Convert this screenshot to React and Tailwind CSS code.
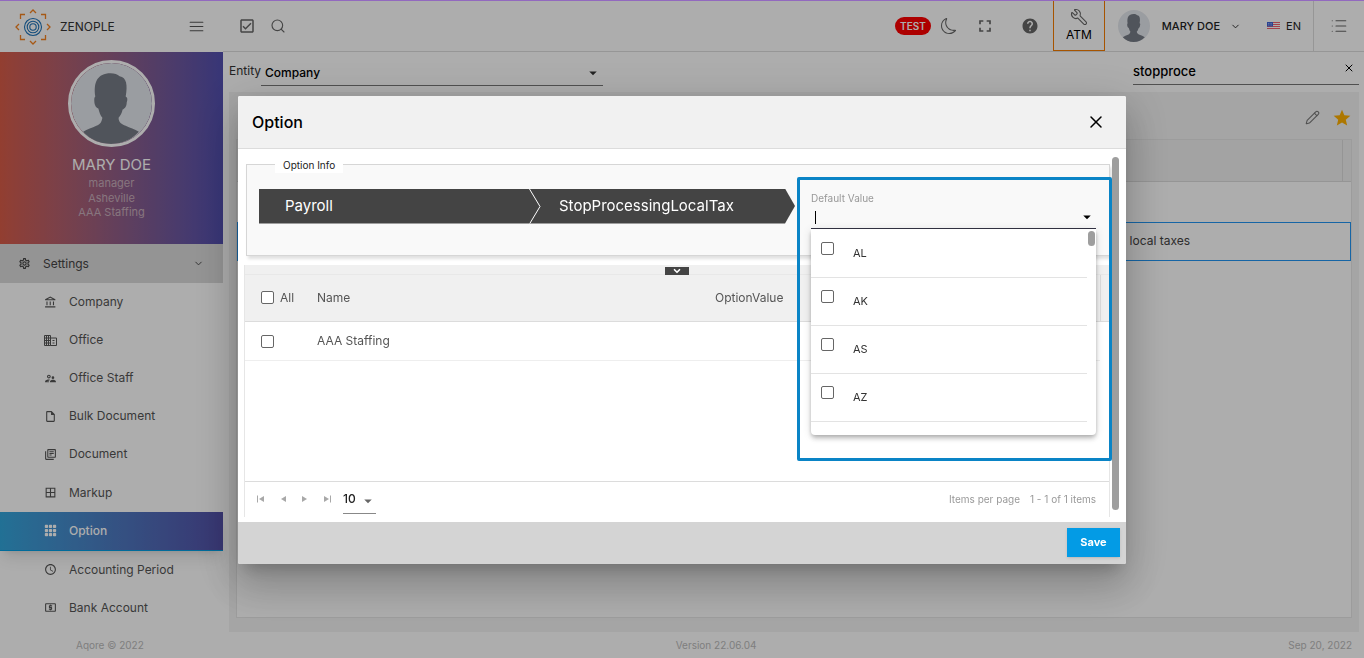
import {
  MdAccessTime,
  MdArrowDropDown,
  MdBorderAll,
  MdFullscreen,
  MdHelp,
  MdOutlineAccountBalance,
  MdOutlineCheckBox,
  MdOutlineInsertDriveFile,
  MdOutlineLibraryBooks,
  MdOutlineLocalAtm,
  MdOutlineSettings,
  MdOutlineSupervisorAccount,
  MdStar,
} from 'react-icons/md';
import { BsFillGrid3X3GapFill, BsMoon } from 'react-icons/bs';
import { FiChevronDown, FiMenu, FiSearch, FiX } from 'react-icons/fi';
import { List, Pencil, Wrench } from 'lucide-react';

const OfficeIcon = ({ className }) => (
  <svg viewBox="0 0 13 12" className={className} fill="none" stroke="currentColor" aria-hidden="true">
    <path d="M.5 1h6v10h-6zM.5 3.500h6M.5 6h6M.5 8.500h6M2.500 1v10M4.500 1v10" />
    <path d="M6.500 3.500h6V11h-6M8.500 6h2M8.500 8.500h2" />
  </svg>
);

const menuItems = [
  { label: 'Company', icon: MdOutlineAccountBalance },
  { label: 'Office', icon: OfficeIcon },
  { label: 'Office Staff', icon: MdOutlineSupervisorAccount },
  { label: 'Bulk Document', icon: MdOutlineInsertDriveFile },
  { label: 'Document', icon: MdOutlineLibraryBooks },
  { label: 'Markup', icon: MdBorderAll },
  { label: 'Option', icon: BsFillGrid3X3GapFill, active: true },
  { label: 'Accounting Period', icon: MdAccessTime },
  { label: 'Bank Account', icon: MdOutlineLocalAtm },
];

const states = ['AL', 'AK', 'AS', 'AZ'];

const Logo = () => (
  <svg viewBox="0 0 36 36" className="size-9" fill="none" aria-hidden="true">
    <g stroke="#f5821f" strokeWidth="1.3">
      <path d="M15 4l3-3 3 3M15 32l3 3 3-3M4 15l-3 3 3 3M32 15l3 3-3 3" />
      <path d="M5.500 10V5.500H10M26 5.500h4.500V10M5.500 26v4.500H10M26 30.500h4.500V26" />
    </g>
    <g stroke="#1e73b8" strokeWidth="1.1">
      <circle cx="18" cy="18" r="8.500" />
      <circle cx="18" cy="18" r="5.800" />
      <circle cx="18" cy="18" r="3.200" />
    </g>
  </svg>
);

const Avatar = ({ className }) => (
  <svg viewBox="0 0 80 80" className={className} role="img" aria-label="Mary Doe">
    <circle cx="40" cy="40" r="40" fill="#e4e7ed" />
    <path
      d="M12 68c4-3 9-4 13-6 4-2 5-3 6-8-2-2-3-5-4-9-3-1-4-5-4-8 0-2 0-3 1-4-2-14 2-23 15-23 4 0 7 1 9 3 7 1 8 9 6 20 2 1 2 3 1 6 0 4-2 6-4 7-1 4-2 6-4 8 0 5 3 6 7 8 4 2 9 3 13 6-7 8-17 12-28 12S19 76 12 68z"
      fill="#767c86"
    />
  </svg>
);

const Flag = () => (
  <svg viewBox="0 0 13 8" className="h-2 w-[13px]" aria-hidden="true">
    <rect width="13" height="8" fill="#fff" />
    <path d="M0 .5h13M0 2.500h13M0 4.500h13M0 6.500h13" stroke="#f0606f" />
    <rect width="6" height="4.500" fill="#3f63d8" />
    <path d="M1 1.500h4M1 3h4" stroke="#cfd8f5" strokeWidth=".6" strokeDasharray="1 .6" />
  </svg>
);

const CheckBox = ({ id, label }) => (
  <input
    type="checkbox"
    id={id}
    aria-label={label}
    className="size-[13px] shrink-0 appearance-none rounded-[2px] border border-[#666] bg-white"
  />
);

const TopBar = () => (
  <header className="flex h-[52px] shrink-0 text-[#333]">
    <div className="flex w-[223px] shrink-0 items-center pt-px pr-[18px] pl-[15px]">
      <Logo />
      <span className="ml-[9px] text-[12px]">ZENOPLE</span>
      <button type="button" aria-label="Toggle menu" className="ml-auto text-[#555]">
        <FiMenu className="size-[17px]" strokeWidth={1.5} />
      </button>
    </div>
    <div className="flex flex-1 items-center border-b border-[#dedede] pt-px pl-[15px] text-[#666]">
      <button type="button" aria-label="Tasks">
        <MdOutlineCheckBox className="size-[18px]" />
      </button>
      <button type="button" aria-label="Search" className="ml-[14px]">
        <FiSearch className="size-4" strokeWidth={1.7} />
      </button>

      <span className="ml-auto rounded-full bg-[#ff0000] px-[5px] text-[10px] leading-[18px] font-semibold text-white">TEST</span>
      <button type="button" aria-label="Dark mode" className="ml-[10px]">
        <BsMoon className="size-4" />
      </button>
      <button type="button" aria-label="Full screen" className="ml-[18px]">
        <MdFullscreen className="size-5" />
      </button>
      <button type="button" aria-label="Help" className="ml-[26px]">
        <MdHelp className="size-[18px]" />
      </button>
      <button
        type="button"
        className="ml-[14px] flex h-[51px] w-[52px] flex-col items-center justify-center self-end border border-[#f57c00] text-[12px] leading-4 text-black"
      >
        <Wrench className="mb-px size-[18px] -rotate-90 text-[#666]" strokeWidth={1.5} />
        ATM
      </button>
      <button type="button" className="ml-[13px] flex items-center text-[11px] font-medium text-[#222]">
        <Avatar className="mr-3 size-8" />
        MARY DOE
        <FiChevronDown className="ml-[10px] size-[11px]" />
      </button>
      <button type="button" className="ml-[26px] flex items-center gap-[6px] text-[11px] text-[#222]">
        <Flag />
        EN
      </button>
      <button
        type="button"
        aria-label="Quick links"
        className="ml-3 flex w-[51px] items-center justify-center self-stretch border-l border-[#dedede]"
      >
        <List className="size-[18px]" strokeWidth={1.5} />
      </button>
    </div>
  </header>
);

const Sidebar = () => (
  <aside className="flex w-[223px] shrink-0 flex-col">
    <div className="flex h-[192px] shrink-0 flex-col items-center bg-linear-to-r from-[#d85c48] to-[#524fb0] pt-2 text-[11px] leading-[14px] text-[#c8aebb]">
      <Avatar className="size-[87px] rounded-full border-[3px] border-white" />
      <span className="mt-2 text-[15px] leading-5 text-white">MARY DOE</span>
      <span className="leading-4">manager</span>
      <span>Asheville</span>
      <span>AAA Staffing</span>
    </div>
    <button type="button" className="flex h-[39px] shrink-0 items-center bg-[#dadada] pr-[19px] pl-[18px] text-[12px] text-[#444]">
      <MdOutlineSettings className="mr-3 size-[13px]" />
      Settings
      <FiChevronDown className="ml-auto size-[11px]" />
    </button>
    <nav className="flex min-h-0 flex-1 flex-col pb-[5px]">
      {menuItems.map(({ label, icon: Icon, active }) => (
        <a
          key={label}
          href="#"
          className={`flex flex-1 items-center gap-3 pl-11 text-[12px] ${
            active
              ? 'border-b border-[#009ee3] bg-linear-to-r from-[#32a6dc] to-[#5350a8] font-medium text-white shadow-lg'
              : 'text-[#555]'
          }`}
        >
          <Icon className="size-[13px]" />
          {label}
        </a>
      ))}
    </nav>
  </aside>
);

const MainContent = () => (
  <main className="flex flex-1 flex-col pr-[5px] pl-[6px]">
    <div className="flex h-10 shrink-0 items-start justify-between text-[12px]">
      <div className="flex items-center text-[#333]">
        <label htmlFor="entity" className="pt-1">Entity</label>
        <div className="relative">
          <select
            id="entity"
            className="h-[34px] w-[342px] appearance-none border-b border-[#777] pt-2 pl-1 font-medium text-black"
          >
            <option>Company</option>
          </select>
          <MdArrowDropDown className="absolute top-3 right-px size-[18px]" />
        </div>
      </div>
      <div className="flex h-[33px] w-[226px] items-center border-b border-[#777]">
        <input
          type="text"
          aria-label="Search options"
          defaultValue="stopproce"
          className="min-w-0 flex-1 pt-2 text-[13px] font-medium text-black outline-none"
        />
        <button type="button" aria-label="Clear" className="mr-1">
          <FiX className="size-3" />
        </button>
      </div>
    </div>

    <div className="flex flex-1 flex-col bg-[#f3f3f3] px-[7px] pb-[14px]">
      <div className="flex h-[47px] shrink-0 items-center justify-end gap-3 pt-1">
        <button type="button" aria-label="Edit">
          <Pencil className="size-[15px] text-[#777]" strokeWidth={1.7} />
        </button>
        <button type="button" aria-label="Favourite">
          <MdStar className="size-5 text-[#ffb000]" />
        </button>
      </div>
      <div className="flex-1 border border-[#e6e6e6] bg-white text-[12px] text-[#444]">
        <div className="flex h-[42px] justify-end border-b border-[#dcdcdc] bg-[#f0f0f0]">
          <span className="w-[9px] border-l border-[#dcdcdc]" />
        </div>
        <div className="h-10" />
        <div className="h-[39px] border border-[#2196f3] pr-[160px] text-right leading-9">Stop processing local taxes</div>
      </div>
    </div>
  </main>
);

const DefaultValueField = () => (
  <div className="relative w-[285px] shrink-0">
    <label htmlFor="default-value" className="block text-[10px] leading-[18px] text-[#999]">
      Default Value
    </label>
    <div className="flex h-[22px] items-center border-b border-[#334] pl-1">
      <span className="h-[13px] w-px bg-black" />
      <input id="default-value" type="text" className="min-w-0 flex-1 text-[12px] caret-transparent outline-none" />
      <MdArrowDropDown className="size-[18px]" />
    </div>

    <div className="absolute inset-x-0 top-full h-[206px] overflow-hidden rounded-b bg-white pt-px shadow-[0_2px_4px_-1px_rgba(0,0,0,0.2),0_4px_5px_rgba(0,0,0,0.14),0_1px_10px_rgba(0,0,0,0.12)]">
      <ul className="mr-[9px]">
        {states.map((state) => (
          <li key={state} className="h-12 border-b border-[#e3e3e3] pt-3 pl-[10px]">
            <label className="flex items-start gap-[19px] text-[11px] leading-[22px] text-[#333]">
              <CheckBox />
              {state}
            </label>
          </li>
        ))}
        <li className="h-12" />
      </ul>
      <span className="absolute top-[2px] right-px h-[15px] w-[7px] rounded-full bg-[#9e9e9e]" />
    </div>

    {/* Focus frame around the field and its list */}
    <div className="pointer-events-none absolute -top-3 -right-4 -left-[14px] h-[284px] rounded-[2px] border-3 border-[#0a84c6]" />
  </div>
);

const OptionInfo = () => (
  <fieldset className="relative z-10 ml-[2px] border border-[#d6d6d6] bg-[#f9f9f9] pb-[26px] shadow-[2px_3px_3px_rgba(0,0,0,0.12)]">
    <legend className="ml-7 bg-white px-2 text-[10px] leading-4 text-[#222]">Option Info</legend>
    <div className="flex items-start gap-4 pt-4 pr-[13px] pl-3">
      <ol className="flex h-[35px] flex-1 items-center bg-[#444] text-[15px] text-white [clip-path:polygon(0_0,calc(100%-10px)_0,100%_50%,calc(100%-10px)_100%,0_100%)]">
        <li className="w-[270px] pl-[26px]">Payroll</li>
        <svg viewBox="0 0 12 35" className="h-full w-3" fill="none" stroke="#fff" aria-hidden="true">
          <path d="M.5 0l10.500 17.500L.5 35" />
        </svg>
        <li className="pl-[18px]">StopProcessingLocalTax</li>
      </ol>
      <DefaultValueField />
    </div>
  </fieldset>
);

const PageArrow = ({ bar }) => (
  <svg viewBox="0 0 8 8" className="size-2" fill="#a8a8a8" aria-hidden="true">
    <path d="M7 1v6L2 4z" />
    {bar && <path d="M0 .5h1v7H0z" />}
  </svg>
);

const Grid = () => (
  <section className="mt-[9px] border-x border-[#e6e6e6]">
    <div className="flex h-[10px] justify-center border-b border-[#e8e8e8] bg-[#f0f0f0] pt-[2px]">
      <button type="button" aria-label="Collapse" className="flex h-2 w-6 items-center justify-center bg-[#444] text-white">
        <FiChevronDown className="size-[10px]" strokeWidth={4} />
      </button>
    </div>
    <div className="h-[206px] text-[12px] text-[#555]">
      <table className="w-full table-fixed border-collapse">
        <thead>
          <tr className="h-[47px] border-b border-[#dcdcdc] bg-[#f0f0f0] text-left">
            <th className="w-[72px] pl-4 font-normal">
              <label className="flex items-center gap-[6px]">
                <CheckBox />
                All
              </label>
            </th>
            <th className="font-normal">Name</th>
            <th className="w-[385px] font-normal">OptionValue</th>
            <th className="w-[9px] border-l border-[#dcdcdc]" aria-label="Scroll" />
          </tr>
        </thead>
        <tbody>
          <tr className="h-[39px]">
            <td className="border-b border-[#eee] pl-4">
              <div className="flex">
                <CheckBox label="Select AAA Staffing" />
              </div>
            </td>
            <td className="border-b border-[#eee]">AAA Staffing</td>
            <td className="border-b border-[#eee]" />
            <td />
          </tr>
        </tbody>
      </table>
    </div>
    <div className="flex h-9 items-center border-t border-[#dcdcdc] pr-[13px] pl-3">
      <div className="flex items-center gap-[14px]">
        <button type="button" aria-label="First page"><PageArrow bar /></button>
        <button type="button" aria-label="Previous page"><PageArrow /></button>
        <button type="button" aria-label="Next page" className="rotate-180"><PageArrow /></button>
        <button type="button" aria-label="Last page" className="rotate-180"><PageArrow bar /></button>
      </div>
      <div className="relative ml-3 self-start">
        <select aria-label="Items per page" className="h-8 w-[33px] appearance-none border-b border-[#888] pt-1 text-[12px] font-medium text-[#222]">
          <option>10</option>
        </select>
        <MdArrowDropDown className="absolute top-[10px] -right-px size-[18px] text-[#666]" />
      </div>
      <span className="ml-auto text-[10px] text-[#999]">Items per page</span>
      <span className="ml-[10px] text-[10px] text-[#999]">1 - 1 of 1 items</span>
    </div>
  </section>
);

const OptionDialog = () => (
  <div
    role="dialog"
    aria-label="Option"
    className="w-full max-w-[888px] overflow-hidden rounded-[2px] bg-white shadow-[0_11px_15px_-7px_rgba(0,0,0,0.2),0_24px_38px_3px_rgba(0,0,0,0.14),0_9px_46px_8px_rgba(0,0,0,0.12)]"
  >
    <div className="flex h-[53px] items-center justify-between border-b border-[#dcdcdc] bg-[#f1f1f1] pr-5 pl-[14px]">
      <h2 className="text-[16px] font-medium text-black">Option</h2>
      <button type="button" aria-label="Close">
        <FiX className="size-5" strokeWidth={1.8} />
      </button>
    </div>
    <div className="flex gap-[2px] pt-2 pr-[7px] pb-[5px] pl-[6px]">
      <div className="min-w-0 flex-1">
        <OptionInfo />
        <Grid />
      </div>
      <div className="relative z-10 mb-[7px] w-[7px] rounded-full bg-[#9e9e9e]" />
    </div>
    <div className="flex h-[42px] items-center justify-end bg-[#d4d4d4] pr-[6px]">
      <button type="button" className="h-[29px] w-[53px] bg-[#039be5] text-[11px] font-bold text-white shadow">
        Save
      </button>
    </div>
  </div>
);

export default function App() {
  return (
    <div className="flex h-screen flex-col bg-white font-[Inter,sans-serif]">
      <TopBar />
      <div className="flex min-h-0 flex-1">
        <Sidebar />
        <MainContent />
      </div>
      <footer className="flex h-[26px] shrink-0 items-center justify-between pr-3 pl-[76px] text-[10px] text-[#bbb]">
        <span>Aqore © 2022</span>
        <span>Version 22.06.04</span>
        <span>Sep 20, 2022</span>
      </footer>

      <div className="fixed inset-0 z-20 flex items-center justify-center border-t border-[#9269bf] bg-black/32">
        <OptionDialog />
      </div>
    </div>
  );
}
